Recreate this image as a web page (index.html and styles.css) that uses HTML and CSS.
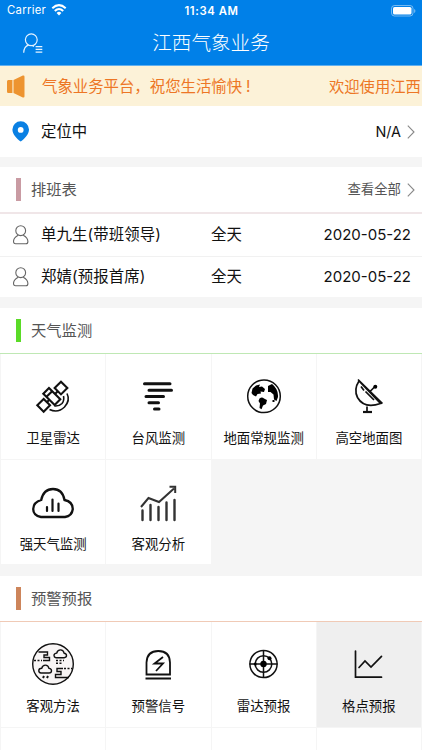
FILE: index.html
```html
<!DOCTYPE html>
<html lang="zh-CN">
<head>
<meta charset="utf-8">
<title>江西气象业务</title>
<link rel="stylesheet" href="styles.css">
</head>
<body>
<header class="top">
  <div class="status">
    <div class="carrier"><span>Carrier</span>
      <svg width="16" height="12" viewBox="0 0 16 12" fill="none" stroke="#fff" stroke-width="2"><path d="M1.3 4.300Q8-2 14.700 4.300M3.800 6.900Q8 3 12.200 6.900"/><path d="M5.600 8.900Q8 6.800 10.400 8.900L8 11.500Z" fill="#fff" stroke="none"/></svg>
    </div>
    <div class="clock">11:34 AM</div>
    <svg class="battery" width="25" height="12" viewBox="0 0 25 12"><rect x=".5" y=".5" width="21.5" height="10.5" rx="3" fill="none" stroke="#fff" stroke-opacity=".45"/><rect x="2" y="2" width="18.5" height="7.5" rx="1.6" fill="#fff"/><path d="M23.200 4v4q1.200-.6 1.200-2t-1.200-2" fill="#fff" fill-opacity=".5"/></svg>
  </div>
  <div class="nav">
    <svg class="menu" width="20" height="21" viewBox="0 0 20 21" fill="none" stroke="#e4f2ff" stroke-width="1.200"><circle cx="8.300" cy="6.800" r="5.900"/><path d="M.7 19.800Q1 13.500 5.400 12.200M9.500 12.800l1.500.6M12.600 13.600h6.700M12.600 16.400h6.700M12.600 19.200h6.700"/></svg>
    <h1>江西气象业务</h1>
  </div>
</header>
<div class="notice">
  <svg width="18" height="23" viewBox="0 0 18 23" fill="#ed9430"><path d="M1.200 5H5.400V18H1.200Q0 18 0 16.500V6.500Q0 5 1.200 5M6.500 5L15.800.5Q17.500 0 17.500 1.800V21.200Q17.500 23 15.800 22.400L6.500 18Z"/></svg>
  <span class="said">气象业务平台，祝您生活愉快<b>!</b></span><span class="next">欢迎使用江西</span>
</div>
<div class="location">
  <svg width="18" height="21" viewBox="0 0 18 21"><path fill="#0a80e3" fill-rule="evenodd" d="M8.700.3a8.300 8.300 0 0 1 8.300 8.300c0 4.800-4.500 9.300-8.300 12C4.900 17.900.4 13.400.4 8.600A8.300 8.300 0 0 1 8.700.3m0 5.700a2.900 2.900 0 1 0 0 5.800 2.900 2.900 0 0 0 0-5.800"/></svg>
  <span class="grow">定位中</span><span class="value">N/A</span>
  <svg class="chev" width="8" height="14" viewBox="0 0 8 14"><path d="M.8.6L7 7 .8 13.400"/></svg>
</div>
<section>
  <div class="head rose"><i></i><h2>排班表</h2><span class="more">查看全部</span><svg class="chev" width="8" height="14" viewBox="0 0 8 14"><path d="M.8.6L7 7 .8 13.400"/></svg></div>
  <div class="duty"><svg width="16" height="20" viewBox="0 0 16 20"><circle cx="7.700" cy="5.700" r="4.900"/><path d="M5.200 10.200Q.6 12.500.5 16.500.5 18.800 2.500 18.800H12.900Q14.900 18.800 14.900 16.500 14.800 12.500 10.200 10.200"/></svg><span class="name">单九生(带班领导)</span><span class="grow">全天</span><time>2020-05-22</time></div>
  <div class="duty"><svg width="16" height="20" viewBox="0 0 16 20"><circle cx="7.700" cy="5.700" r="4.900"/><path d="M5.200 10.200Q.6 12.500.5 16.500.5 18.800 2.500 18.800H12.900Q14.900 18.800 14.900 16.500 14.800 12.500 10.200 10.200"/></svg><span class="name">郑婧(预报首席)</span><span class="grow">全天</span><time>2020-05-22</time></div>
</section>
<section>
  <div class="head green"><i></i><h2>天气监测</h2></div>
  <div class="grid">
    <div class="tile"><svg viewBox="0 0 44 44"><g transform="translate(21.500 21.500) rotate(-45)" stroke-width="2.100"><rect x="-4.500" y="-8.500" width="8" height="16"/><path d="M-4.500-4h8"/><rect x="-17" y="-4.500" width="9" height="9"/><rect x="7.500" y="-4.500" width="9" height="9"/><path d="M-8 0h3.500M3.500 0h4"/></g><path stroke-width="1.600" d="M23.500 31Q28 31.500 31 28.500 33.500 25.500 32.500 21M18.500 34.500Q27 38.500 33.500 32 39.500 25.500 36 18.500"/></svg><span>卫星雷达</span></div>
    <div class="tile"><svg viewBox="0 0 44 44"><path stroke-width="3" stroke-linecap="round" d="M8.500 8.800h25.500M13 15.200h22.500M10 21.500h17.500M13 27.800h9.500M18.500 34h4.500"/></svg><span>台风监测</span></div>
    <div class="tile"><svg viewBox="0 0 44 44"><circle cx="22" cy="21.300" r="16.300" stroke-width="1.500"/><g fill="#000" stroke="none"><path d="M9.500 18L10.500 13.500 14 10.500 18 9.500 17 12 20 11.500 23 14 22 17 18.500 16.500 19 18.500 15.500 19 14 21.500 11 20ZM17.500 23.500Q20 21.500 22 23.500L25 25 24 29 21 30.500 19.500 34.200 17.500 33 18 28.500 16.500 26ZM26 11L30 9Q36.500 14 36 22L34.500 26 32 24.500 31.500 19.500 28.500 17 26 17ZM30.500 25h2v2h-2z"/></g></svg><span>地面常规监测</span></div>
    <div class="tile"><svg viewBox="0 0 44 44" stroke-width="1.700"><path d="M12 6Q6.500 14.500 10.500 22.500 17 34 33.500 28.500ZM11 4.500l24.500 24M14 11.500l3 4M18.500 16.500l8.500 8.500M23.500 16l4-4M20 31.500v5"/><circle cx="28.300" cy="11.800" r="2" fill="#000" stroke="none"/><path d="M16 37h9" stroke-width="2.200"/></svg><span>高空地面图</span></div>
    <div class="tile"><svg viewBox="0 0 44 44"><path stroke-width="2.300" d="M10 36Q2.200 34.500 2.200 28 2.500 21 10.200 19 12.500 8 22 8T33.500 19Q41.700 20.500 41.800 28 41 35 34 36Z"/><path stroke-width="2.200" stroke-linecap="round" d="M16 26v4M21.500 18.500v11.500M27.500 22.500v7.500"/></svg><span>强天气监测</span></div>
    <div class="tile"><svg viewBox="0 0 44 44" class="soft"><path stroke-width="2" d="M5 26L12.500 17 23 21 38 7.500M33.500 5.800H39.200V12"/><path stroke-width="2.400" stroke-linecap="round" d="M6.500 29.500v9.500M14.500 24v15M22.500 26v13M30.500 21.500v17.500M38.500 19v20"/></svg><span>客观分析</span></div>
  </div>
</section>
<section>
  <div class="head orange"><i></i><h2>预警预报</h2></div>
  <div class="grid">
    <div class="tile"><svg viewBox="0 0 44 44" stroke-width="1.400"><circle cx="22" cy="21" r="20.300" fill="#f8f5f5"/><path d="M7.500 9h9v3H13v2.500h5.500v3H12M25 14.700q-2-.3-2-2.200 0-2.200 2.700-2.400.8-3.200 3.800-3.200t3.600 3.300q2.400.2 2.400 2.300 0 2-2.300 2.200ZM10 30q-2.200-.3-2.200-2.300 0-2.300 2.900-2.400.8-3.200 3.700-3.200t3.600 3.300q2.500.2 2.500 2.300 0 2.300-2.500 2.300ZM38 34.500H24.500V31.500H30V28.500H26V25.500H32"/><path stroke-dasharray="2 1.500" d="M3 17.500h8M33 25.500h8M25 17.500h8M25 20.300h7"/><path d="M13 33l-1 2M17 33l-1 2" stroke-width="2"/></svg><span>客观方法</span></div>
    <div class="tile"><svg viewBox="0 0 44 44"><path stroke-width="1.800" d="M10.500 31.500V19.500Q11 8 22.300 8T34 19.500V31.500ZM9.500 35.500H35M27 14L18.500 20.500H27L20 28"/></svg><span>预警信号</span></div>
    <div class="tile"><svg viewBox="0 0 44 44" stroke-width="1.500"><circle cx="21.500" cy="21" r="13.600"/><circle cx="21.500" cy="21" r="8.300"/><path d="M7.500 21h28M21.500 7v28"/><g fill="#000" stroke="none"><circle cx="21.500" cy="21" r="3.200"/><circle cx="27.500" cy="15.300" r="2"/><circle cx="13.200" cy="21" r="1.500"/></g></svg><span>雷达预报</span></div>
    <div class="tile pressed"><svg viewBox="0 0 44 44"><path stroke-width="1.700" stroke-linecap="round" d="M8.500 8V34.200H34.500M12 24.500L18 18 24 24 34.500 13.300"/></svg><span>格点预报</span></div>
    <div class="tile"></div><div class="tile"></div><div class="tile"></div><div class="tile"></div>
  </div>
</section>
</body>
</html>
```
FILE: styles.css
```css
* { box-sizing: border-box; }
html { height: 750px; overflow: hidden; }
body {
  margin: 0;
  height: 750px;
  overflow: hidden;
  background: #f5f5f5;
  color: #111;
  font: 15.4px/1 Inter, "Noto Sans CJK SC", sans-serif;
  white-space: nowrap;
}
svg { display: block; flex: none; }
h1, h2 { margin: 0; font-weight: 300; }
.top { height: 66px; background: #0080e8; color: #fff; border-bottom: 1px solid #62b0ef; }
.status {
  height: 22px;
  padding: 0 6px 0 7px;
  display: grid;
  grid-template-columns: 1fr auto 1fr;
  align-items: center;
  font-size: 11.3px;
}
.carrier { display: flex; align-items: center; gap: 5px; letter-spacing: .3px; }
.carrier svg { margin-top: -1px; }
.clock { font-weight: 600; font-size: 11.3px; letter-spacing: .6px; padding-top: 1px; }
.battery { justify-self: end; margin-top: -1px; }
.nav { height: 43px; display: grid; grid-template-columns: 1fr auto 1fr; align-items: center; }
.menu { margin-left: 23px; }
h1 { font-size: 19.6px; padding-top: 1px; }
.notice {
  height: 40px;
  padding-left: 7px;
  display: flex;
  align-items: center;
  overflow: hidden;
  background: #fcf2d8;
  color: #ed7625;
}
.notice span { flex: none; padding-top: 2px; }
.notice b { margin-left: 4px; font-weight: 400; }
.said { width: 287px; margin-left: 17px; }
.next { font-size: 15.3px; }
.location { height: 51px; padding: 0 7px 0 12px; display: flex; align-items: center; background: #fff; }
.location .grow { margin-left: 11px; padding-top: 1px; }
.value { font-size: 14.4px; padding-top: 1px; }
.grow { flex: 1; }
.chev { margin-left: 6px; fill: none; stroke: #888; stroke-width: 1.1; }
section { margin-top: 10px; }
section + section { margin-top: 11px; }
.head { height: 46px; padding: 0 7px 0 16px; display: flex; align-items: center; background: #fff; color: #555; border-bottom: 1px solid; }
.head i { width: 5px; height: 23px; margin-right: 10px; }
.head h2 { flex: 1; font-size: 15.3px; font-weight: 400; }
.more { font-size: 13.4px; padding-top: 1px; }
.head.rose { height: 47px; border-bottom: 2px solid #f0e6e8; }
.rose i { background: #c99ba3; }
.head.green { border-bottom-color: #bfe8b4; }
.green i { background: #5adb27; }
.head.orange { border-bottom-color: #f0cab6; }
.orange i { background: #cd855b; }
.duty { height: 42px; padding: 0 11px 0 13px; display: flex; align-items: center; background: #fff; }
.duty + .duty { height: 41px; border-top: 1px solid #f1f1f1; }
.duty svg { fill: none; stroke: #666; stroke-width: 1.1; }
.name { width: 170px; margin-left: 12px; letter-spacing: .12px; }
.duty time { font-size: 15px; padding-bottom: 2px; }
.grid { display: grid; grid-template-columns: repeat(4, 104.25px); grid-auto-rows: 104.5px; gap: 1px; padding: 0 1px 1px; }
.tile { display: flex; flex-direction: column; align-items: center; padding-top: 21px; background: #fff; font-size: 13.4px; }
.tile svg { width: 44px; height: 44px; fill: none; stroke: #111; }
.tile svg.soft { stroke: #333; }
.tile span { margin-top: 13px; }
.pressed { background: #efefef; }
```
